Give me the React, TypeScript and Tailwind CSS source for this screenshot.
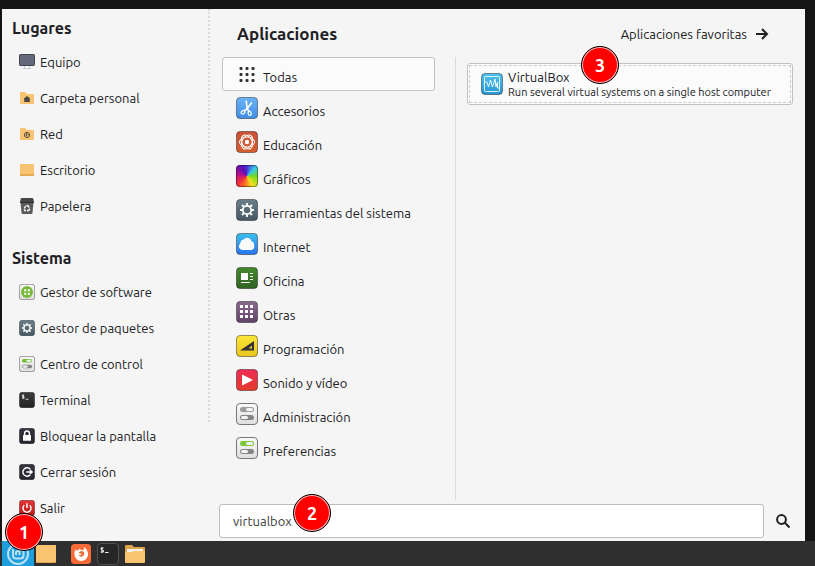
import type { ReactNode } from 'react';

const DARK = '#303036';

function Tile({ size, id, from, to, stroke = '#00000066', children }: { size: number; id: string; from: string; to: string; stroke?: string; children: ReactNode }) {
  return (
    <svg width={size} height={size} viewBox="0 0 22 22" className="shrink-0" aria-hidden="true">
      <defs>
        <linearGradient id={id} x1="0" y1="0" x2="0" y2="1">
          <stop offset="0" stopColor={from} />
          <stop offset="1" stopColor={to} />
        </linearGradient>
      </defs>
      <rect x="0.5" y="0.5" width="21" height="21" rx="3.5" fill={`url(#${id})`} stroke={stroke} />
      {children}
    </svg>
  );
}

function Gear() {
  return (
    <g stroke="#fff" fill="none">
      <circle cx="11" cy="11" r="4.2" strokeWidth="1.800" />
      <g strokeWidth="2">
        <path d="M11 4v2.600M11 15.400V18M4 11h2.600M15.400 11H18M6 6l1.900 1.900M14.100 14.100L16 16M6 16l1.900-1.900M14.100 7.900L16 6" />
      </g>
    </g>
  );
}

function Switches({ top }: { top: string }) {
  return (
    <g>
      <rect x="4" y="4" width="14" height="5" rx="2.500" fill={top} />
      <rect x="10" y="5" width="7" height="3" rx="1.500" fill="#f4f4f4" />
      <rect x="4" y="12" width="14" height="5" rx="2.500" fill="#858585" />
      <rect x="5" y="13" width="7" height="3" rx="1.500" fill="#f4f4f4" />
    </g>
  );
}

function Folder({ children }: { children?: ReactNode }) {
  return (
    <svg width="16" height="16" viewBox="0 0 16 16" className="shrink-0" aria-hidden="true">
      <path d="M1 2.800Q1 2 1.800 2H6l2 2h6.200q.8 0 .8.800v8.400q0 .8-.8.800H1.800Q1 14 1 13.200z" fill="#f8c471" />
      {children}
    </svg>
  );
}

const places: { label: string; icon: ReactNode }[] = [
  {
    label: 'Equipo',
    icon: (
      <svg width="16" height="16" viewBox="0 0 16 16" className="shrink-0" aria-hidden="true">
        <path d="M5 12h6v2h1v1H4v-1h1z" fill="#c9cdd2" />
        <path d="M6 12h4v2H6z" fill="#fff" />
        <rect x="0.500" y="0.500" width="15" height="11" rx="0.800" fill="#646a7b" stroke="#3f4350" />
      </svg>
    ),
  },
  { label: 'Carpeta personal', icon: <Folder><path d="M8 6l3.400 2.800h-.6V12H5.200V8.800h-.6z" fill="#4b4640" /></Folder> },
  {
    label: 'Red',
    icon: (
      <Folder>
        <circle cx="8" cy="9" r="2.600" fill="none" stroke="#5b5040" strokeWidth="1" />
        <path d="M7 7l1.500 1-.5 1.200L9 11l-2.300-1.500zM9 7.500l1 1.500-.8.700z" fill="#5b5040" />
      </Folder>
    ),
  },
  {
    label: 'Escritorio',
    icon: (
      <svg width="16" height="16" viewBox="0 0 16 16" className="shrink-0" aria-hidden="true">
        <rect x="1" y="2" width="14" height="12" rx="0.600" fill="#e5aa50" />
        <rect x="1" y="2" width="14" height="10" rx="0.600" fill="#f8c471" />
      </svg>
    ),
  },
  {
    label: 'Papelera',
    icon: (
      <svg width="16" height="16" viewBox="0 0 16 16" className="shrink-0" aria-hidden="true">
        <path d="M1.500 4h13l-1 11q-.1 1-1 1h-9q-.9 0-1-1z" fill="#5c5c5c" />
        <path d="M2.500 0h11q.6 0 .7.600L15 4H1l.8-3.400q.1-.6.700-.6z" fill="#464646" />
        <path d="M1 4h14v1H1z" fill="#303030" />
        <path d="M5.300 10.500L6.600 8M7.300 7.600h1.600l1.200 2M10.700 10.600l-1 1.900H8M7 12.500H5.800l-.6-1" fill="none" stroke="#fff" strokeWidth="1.400" />
      </svg>
    ),
  },
];

const system: { label: string; icon: ReactNode }[] = [
  {
    label: 'Gestor de software',
    icon: (
      <Tile size={16} id="sw" from="#fafafa" to="#dedede" stroke="#777">
        <circle cx="11" cy="11" r="8.200" fill="#78b83c" />
        <g fill="#e9f5dd">
          <rect x="7" y="7" width="3.200" height="3.200" rx="1" />
          <rect x="12" y="7" width="3.200" height="3.200" rx="1" />
          <rect x="7" y="12" width="3.200" height="3.200" rx="1" />
          <rect x="12" y="12" width="3.200" height="3.200" rx="1" />
        </g>
      </Tile>
    ),
  },
  { label: 'Gestor de paquetes', icon: <Tile size={16} id="pk" from="#6b7f8a" to="#455863"><Gear /></Tile> },
  { label: 'Centro de control', icon: <Tile size={16} id="cc" from="#f8f8f8" to="#dedede" stroke="#777"><Switches top="#74bd35" /></Tile> },
  {
    label: 'Terminal',
    icon: (
      <Tile size={16} id="tm" from="#3d3d3d" to="#222">
        <path d="M7 4.500H4.800v2H7v2H4.500M5.800 3.500v6M9 10h4" fill="none" stroke="#eee" strokeWidth="1.200" />
      </Tile>
    ),
  },
  {
    label: 'Bloquear la pantalla',
    icon: (
      <Tile size={16} id="lk" from="#36343f" to="#25232e">
        <rect x="5.500" y="9.500" width="11" height="8" rx="0.800" fill="#fff" />
        <path d="M7.700 10V7.500a3.300 3.300 0 016.600 0V10" fill="none" stroke="#fff" strokeWidth="2" />
      </Tile>
    ),
  },
  {
    label: 'Cerrar sesión',
    icon: (
      <Tile size={16} id="lo" from="#36343f" to="#25232e">
        <path d="M15.500 7.200A5.800 5.800 0 1015.500 14.800M10 11h8M15 8.500l3 2.500-3 2.500" fill="none" stroke="#fff" strokeWidth="2" />
      </Tile>
    ),
  },
  {
    label: 'Salir',
    icon: (
      <Tile size={16} id="ex" from="#e33535" to="#bd1717">
        <path d="M7.300 7.200a5.500 5.500 0 107.400 0M11 4.500V11" fill="none" stroke="#fff" strokeWidth="2" />
      </Tile>
    ),
  },
];

const categories: { label: string; icon: ReactNode }[] = [
  {
    label: 'Todas',
    icon: (
      <svg width="22" height="22" viewBox="0 0 22 22" className="shrink-0" fill={DARK} aria-hidden="true">
        {[4, 10, 16].map((y) => [4, 10, 16].map((x) => <rect key={`${x}-${y}`} x={x - 0.500} y={y} width="3" height="3" rx="1" />))}
      </svg>
    ),
  },
  {
    label: 'Accesorios',
    icon: (
      <Tile size={22} id="ac" from="#6ab3f8" to="#3f8ee6">
        <g fill="none" stroke="#fff" strokeWidth="1.200">
          <path d="M10.200 3.500l.9 8 2.200 3.500M15.800 5.500L11 12l-3.200 2.300" strokeWidth="1.700" />
          <ellipse cx="7" cy="15.300" rx="2" ry="1.600" transform="rotate(-30 7 15.300)" />
          <ellipse cx="13.700" cy="16.400" rx="1.500" ry="2.100" transform="rotate(-15 13.700 16.400)" />
        </g>
      </Tile>
    ),
  },
  {
    label: 'Educación',
    icon: (
      <Tile size={22} id="ed" from="#cc5038" to="#d3602e">
        <g fill="none" stroke="#fff" strokeWidth="1">
          <ellipse cx="11" cy="11" rx="7.500" ry="5" />
          <ellipse cx="11" cy="11" rx="7.500" ry="5" transform="rotate(60 11 11)" />
          <ellipse cx="11" cy="11" rx="7.500" ry="5" transform="rotate(120 11 11)" />
        </g>
        <circle cx="11" cy="11" r="2.200" fill="#fff" />
      </Tile>
    ),
  },
  {
    label: 'Gráficos',
    icon: (
      <span className="size-[22px] shrink-0 rounded-[4px] border border-black/40 bg-[conic-gradient(from_0deg,#4a2fd0,#38c8e8_45deg,#6fdc20_90deg,#f0e020_150deg,#f87820_190deg,#f0303c_230deg,#b8108c_280deg,#5810b8_330deg,#4a2fd0)] bg-origin-border" />
    ),
  },
  { label: 'Herramientas del sistema', icon: <Tile size={22} id="hs" from="#6b7f8a" to="#455863"><Gear /></Tile> },
  {
    label: 'Internet',
    icon: (
      <Tile size={22} id="in" from="#3cc0ee" to="#2b74ee">
        <path d="M6 17a3.600 3.600 0 01-1.600-6.500 3.800 3.800 0 013.200-4 4.600 4.600 0 018 1.700A3.600 3.600 0 0118 12.500 3.600 3.600 0 0115.800 17z" fill="#fafafa" />
      </Tile>
    ),
  },
  {
    label: 'Oficina',
    icon: (
      <Tile size={22} id="of" from="#44892f" to="#2f6423">
        <path d="M5 6h7v7H5zM14 6h3v1h-3zM14 9h3v1h-3zM14 12h3v1h-3zM5 15h9v1H5z" fill="#fff" />
      </Tile>
    ),
  },
  {
    label: 'Otras',
    icon: (
      <Tile size={22} id="ot" from="#8b6a8f" to="#63426a">
        <path d="M4 4h3v3H4zM9 4h3v3H9zM14 4h3v3h-3zM4 9h3v3H4zM9 9h3v3H9zM14 9h3v3h-3zM4 14h3v3H4zM9 14h3v3H9zM14 14h3v3h-3z" fill="#fff" />
      </Tile>
    ),
  },
  {
    label: 'Programación',
    icon: (
      <Tile size={22} id="pr" from="#fbe63a" to="#e9c51c">
        <path d="M4 15.500L18 6v9.500zM12.500 13.500H16v-3z" fill={DARK} fillRule="evenodd" />
      </Tile>
    ),
  },
  {
    label: 'Sonido y vídeo',
    icon: <Tile size={22} id="so" from="#ef2c56" to="#e33b2b"><path d="M6 5.500L17 11 6 16.500z" fill="#fff" /></Tile>,
  },
  { label: 'Administración', icon: <Tile size={22} id="ad" from="#fafafa" to="#dedede" stroke="#777"><Switches top="#9c9c9c" /></Tile> },
  { label: 'Preferencias', icon: <Tile size={22} id="pf" from="#fafafa" to="#dedede" stroke="#777"><Switches top="#78c83a" /></Tile> },
];

function SideGroup({ title, items }: { title: string; items: { label: string; icon: ReactNode }[] }) {
  return (
    <section>
      <h2 className="flex h-8 items-center pl-2.5 text-base font-bold">{title}</h2>
      <ul>
        {items.map((item) => (
          <li key={item.label}>
            <button type="button" className="flex h-9 w-full items-center gap-[5px] pl-[17px] text-left">
              {item.icon}
              <span>{item.label}</span>
            </button>
          </li>
        ))}
      </ul>
    </section>
  );
}

function Badge({ n, place }: { n: number; place: string }) {
  return (
    <span className={`absolute z-10 flex size-[38px] items-center justify-center rounded-full border border-black bg-[#fe0000] text-lg font-bold text-white ring-1 ring-white/80 ring-inset ${place}`}>
      {n}
    </span>
  );
}

export default function App() {
  return (
    <div className="relative flex min-h-screen flex-col overflow-hidden bg-[#141414] font-['Ubuntu','Noto_Sans',sans-serif] text-[13px] leading-4 text-[#202024]">
      <div className="mt-[9px] mr-2.5 ml-0.5 flex flex-1 bg-[#f5f5f5]">
        <aside className="flex w-52 shrink-0 items-start">
          <div className="flex min-w-0 flex-1 flex-col gap-[18px] pt-[3px]">
            <SideGroup title="Lugares" items={places} />
            <SideGroup title="Sistema" items={system} />
          </div>
          <div className="h-[413px] border-r-2 border-dotted border-[#dcdcdc]" />
        </aside>

        <main className="flex min-w-0 flex-1 flex-col pr-3 pl-[9px]">
          <header className="flex h-12 items-center justify-between pt-0.5 pr-6 pl-[18px]">
            <h2 className="text-[17px] font-bold">Aplicaciones</h2>
            <button type="button" className="flex items-center gap-2">
              Aplicaciones favoritas
              <svg width="14" height="14" viewBox="0 0 14 14" fill="none" stroke="#202020" strokeWidth="2" aria-hidden="true">
                <path d="M1 7h11M7 2l5 5-5 5" />
              </svg>
            </button>
          </header>

          <div className="flex flex-1">
            <ul className="ml-[3px] w-[213px] shrink-0">
              {categories.map((c, i) => (
                <li key={c.label}>
                  <button
                    type="button"
                    className={`flex h-[34px] w-full items-center gap-[5px] rounded-[3px] border pl-[13px] text-left ${i === 0 ? 'border-[#c2c2c2] bg-[#fbfbfb]' : 'border-transparent'}`}
                  >
                    <span className="flex">{c.icon}</span>
                    <span className="pt-1.5">{c.label}</span>
                  </button>
                </li>
              ))}
            </ul>
            <div className="ml-5 w-px bg-[#dadada]" />
            <div className="min-w-0 flex-1 pt-1.5 pl-[11px]">
              <button type="button" className="w-full rounded-[3px] border border-[#c2c2c2] bg-[#fbfbfb] p-px text-left">
                <span className="flex h-[38px] items-center gap-[5px] border border-dashed border-[#cccccc] pl-[11px]">
                  <Tile size={22} id="vb" from="#4fc3ee" to="#2796cf">
                    <rect x="3.500" y="3.500" width="15" height="15" rx="1" fill="none" stroke="#d9f2fc" />
                    <path d="M3.500 9H6l1.500 5 2-7 2 7 2.500-8 1 8 1.500-5v6h2" fill="none" stroke="#e9f8fe" />
                  </Tile>
                  <span className="flex min-w-0 flex-col">
                    <span className="leading-4">VirtualBox</span>
                    <span className="text-[11px] leading-[14px] whitespace-nowrap">Run several virtual systems on a single host computer</span>
                  </span>
                </span>
              </button>
            </div>
          </div>

          <form className="flex items-center gap-3 pt-1 pb-[3px]" onSubmit={(e) => e.preventDefault()}>
            <input
              type="text"
              aria-label="Buscar"
              defaultValue="virtualbox"
              className="h-[34px] min-w-0 flex-1 rounded-[3px] border border-[#bcbcbc] bg-white px-[13px] text-[#3c3c3c] outline-none"
            />
            <button type="submit" aria-label="Buscar" className="mr-[3px]">
              <svg width="14" height="14" viewBox="0 0 14 14" fill="none" stroke="#202020" strokeWidth="2" aria-hidden="true">
                <circle cx="5.500" cy="5.500" r="4.400" />
                <path d="M8.500 8.500l5 5" />
              </svg>
            </button>
          </form>
        </main>
      </div>

      <nav aria-label="Panel" className="flex h-[25px] items-center bg-[#2f2f2f] pl-0.5">
        <button type="button" aria-label="Menú" className="flex h-full w-8 items-center justify-center bg-[#1f9ede]">
          <svg width="24" height="24" viewBox="0 0 24 24" fill="none" stroke="#b9e0f4" strokeWidth="2" aria-hidden="true">
            <circle cx="12" cy="12" r="10" />
            <path d="M7 7v6.500a3 3 0 003 3h4.500a3 3 0 003-3V10a2 2 0 00-4 0v3M13.500 10a2 2 0 00-3.500 0v3" />
          </svg>
        </button>
        <button type="button" aria-label="Mostrar escritorio" className="ml-0.5">
          <svg width="20" height="20" viewBox="0 0 20 20" aria-hidden="true">
            <rect y="1" width="20" height="18" rx="1" fill="#e5aa50" />
            <rect y="1" width="20" height="17" rx="1" fill="#f8c471" />
          </svg>
        </button>
        <button type="button" aria-label="Firefox" className="ml-[15px]">
          <svg width="20" height="20" viewBox="0 0 20 20" aria-hidden="true">
            <rect width="20" height="20" rx="3.500" fill="#f96b36" />
            <path d="M4.500 5.500C1.500 10.500 5 17 10 17s8.500-5 6.500-9.500c-.7-2-2-3.500-3.800-4.500.5 1.500.3 2.500-.3 3.300C11 5.500 9 6 8 4.500c-.3 1-.3 1.500-.5 2-1.200.3-2.300 0-3-1z" fill="#fff" />
            <path d="M7.500 9c1 .8 2.200.4 3.200 1-.8 1.500-2 1-3 1 .8 1.900 3.800 2.300 5 .5 1-1.500.4-3-.5-4-1.200-.9-2.700-.6-3.200.3-.6.100-1.100.500-1.500 1.200z" fill="#f96b36" />
          </svg>
        </button>
        <button type="button" aria-label="Terminal" className="ml-1.5">
          <svg width="22" height="22" viewBox="0 0 22 22" aria-hidden="true">
            <rect x="0.500" y="0.500" width="21" height="21" rx="3.500" fill="#262626" stroke="#505050" />
            <path d="M6.500 5H4v1.500l2.500 1V9H3.500M5 4v6M8 9.500h3.500" fill="none" stroke="#eee" />
          </svg>
        </button>
        <button type="button" aria-label="Archivos" className="ml-1.5">
          <svg width="20" height="20" viewBox="0 0 20 20" aria-hidden="true">
            <path d="M0 2q0-1 1-1h6l2 2h10q1 0 1 1v4H0z" fill="#dda34d" />
            <rect x="2" y="5" width="16" height="5" fill="#f3f0ea" />
            <path d="M0 8h7l2-1h11v11q0 1-1 1H1q-1 0-1-1z" fill="#f8c471" />
          </svg>
        </button>
      </nav>

      <Badge n={1} place="top-[513px] left-[5px]" />
      <Badge n={2} place="top-[494px] left-[293px]" />
      <Badge n={3} place="top-[46px] left-[581px]" />
    </div>
  );
}
